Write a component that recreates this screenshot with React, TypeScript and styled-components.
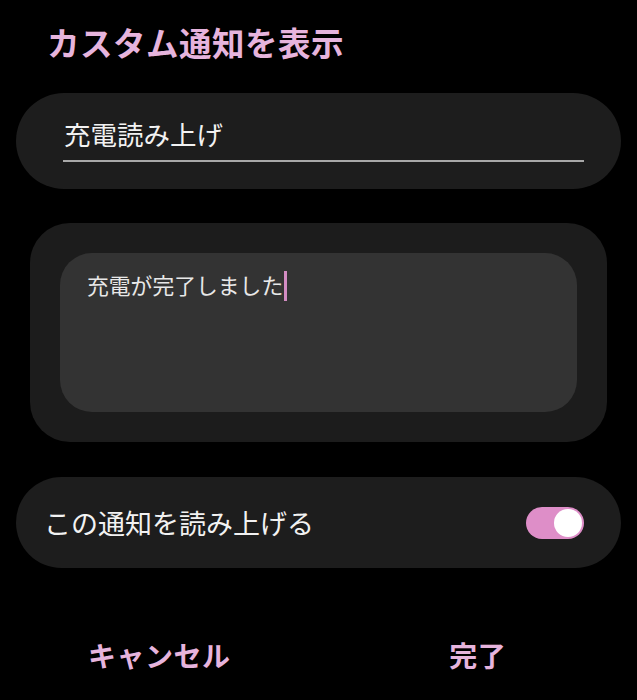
import styled, { createGlobalStyle } from "styled-components";

const GlobalStyle = createGlobalStyle`
  html, body {
    margin: 0;
    padding: 0;
    background: #000;
  }
  body {
    font-family: "Noto Sans CJK JP", "Noto Sans", sans-serif;
    height: 700px;
    overflow: hidden;
  }
  * {
    box-sizing: border-box;
  }
`;

const Screen = styled.div`
  display: flex;
  flex-direction: column;
  padding: 0 16px;
  width: 637px;
  height: 700px;
  background: #000;
`;

const Title = styled.h1`
  margin: 22px 0 0 31px;
  font-size: 32.5px;
  line-height: 40px;
  font-weight: 700;
  color: #e6b4dd;
  letter-spacing: 0.5px;
`;

const NameCard = styled.div`
  margin-top: 31px;
  height: 96px;
  padding: 24px 37px 0 47px;
  background: #1d1d1d;
  border-radius: 48px;
`;

const NameText = styled.div`
  font-size: 26.5px;
  line-height: 34px;
  color: #f2f2f2;
  padding-left: 1px;
`;

const Underline = styled.div`
  margin-top: 9px;
  height: 2px;
  background: #a8a8a8;
`;

const MessageCard = styled.div`
  margin: 34px 14px 0;
  padding: 30px;
  background: #1c1c1c;
  border-radius: 40px;
`;

const MessageBox = styled.div`
  height: 159px;
  padding: 17px 27px;
  background: #333333;
  border-radius: 32px;
`;

const MessageText = styled.span`
  font-size: 21.8px;
  line-height: 30px;
  color: #e8e8e8;
`;

const Caret = styled.span`
  display: inline-block;
  width: 3px;
  height: 30px;
  margin-left: 1px;
  vertical-align: -7px;
  background: #d38cc2;
`;

const ToggleCard = styled.div`
  margin-top: 35px;
  height: 91px;
  padding: 0 37px 0 28px;
  display: flex;
  align-items: center;
  justify-content: space-between;
  background: #1d1d1d;
  border-radius: 46px;
`;

const ToggleLabel = styled.span`
  font-size: 27px;
  color: #f2f2f2;
`;

const Switch = styled.div<{ on: boolean }>`
  width: 58px;
  height: 32px;
  padding: 2px;
  border-radius: 16px;
  background: ${({ on }) => (on ? "#de8ec8" : "#555")};
  display: flex;
  justify-content: ${({ on }) => (on ? "flex-end" : "flex-start")};
  align-items: center;
`;

const Knob = styled.div`
  width: 28px;
  height: 28px;
  border-radius: 50%;
  background: #fff;
`;

const Actions = styled.div`
  margin: 67px -16px 0;
  display: flex;
`;

const ActionButton = styled.button`
  flex: 1;
  border: none;
  background: transparent;
  padding: 0;
  font-family: inherit;
  font-size: 28px;
  line-height: 40px;
  font-weight: 700;
  color: #e6b4dd;
  letter-spacing: 0.5px;
`;

export default function App() {
  return (
    <>
      <GlobalStyle />
      <Screen>
        <Title>カスタム通知を表示</Title>
        <NameCard>
          <NameText>充電読み上げ</NameText>
          <Underline />
        </NameCard>
        <MessageCard>
          <MessageBox>
            <MessageText>充電が完了しました</MessageText>
            <Caret />
          </MessageBox>
        </MessageCard>
        <ToggleCard>
          <ToggleLabel>この通知を読み上げる</ToggleLabel>
          <Switch on>
            <Knob />
          </Switch>
        </ToggleCard>
        <Actions>
          <ActionButton>キャンセル</ActionButton>
          <ActionButton>完了</ActionButton>
        </Actions>
      </Screen>
    </>
  );
}
